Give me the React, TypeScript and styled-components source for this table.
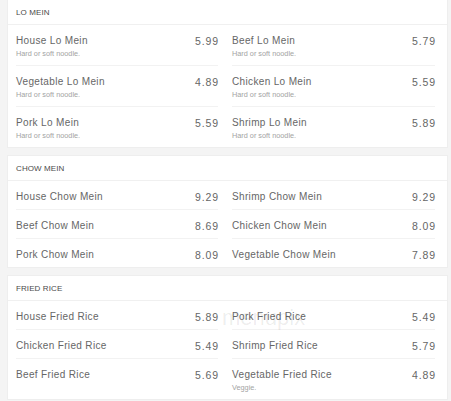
import React from 'react';
import styled, { createGlobalStyle } from 'styled-components';

interface IItem {
  name: string;
  price: string;
  note?: string;
}

interface ISection {
  title: string;
  items: IItem[];
}

const noodle = 'Hard or soft noodle.';

// Menu data, in reading order (left column, then right column, row by row).
const sections: ISection[] = [
  {
    title: 'LO MEIN',
    items: [
      { name: 'House Lo Mein', price: '5.99', note: noodle },
      { name: 'Beef Lo Mein', price: '5.79', note: noodle },
      { name: 'Vegetable Lo Mein', price: '4.89', note: noodle },
      { name: 'Chicken Lo Mein', price: '5.59', note: noodle },
      { name: 'Pork Lo Mein', price: '5.59', note: noodle },
      { name: 'Shrimp Lo Mein', price: '5.89', note: noodle },
    ],
  },
  {
    title: 'CHOW MEIN',
    items: [
      { name: 'House Chow Mein', price: '9.29' },
      { name: 'Shrimp Chow Mein', price: '9.29' },
      { name: 'Beef Chow Mein', price: '8.69' },
      { name: 'Chicken Chow Mein', price: '8.09' },
      { name: 'Pork Chow Mein', price: '8.09' },
      { name: 'Vegetable Chow Mein', price: '7.89' },
    ],
  },
  {
    title: 'FRIED RICE',
    items: [
      { name: 'House Fried Rice', price: '5.89' },
      { name: 'Pork Fried Rice', price: '5.49' },
      { name: 'Chicken Fried Rice', price: '5.49' },
      { name: 'Shrimp Fried Rice', price: '5.79' },
      { name: 'Beef Fried Rice', price: '5.69' },
      { name: 'Vegetable Fried Rice', price: '4.89', note: 'Veggie.' },
    ],
  },
];

const GlobalStyle = createGlobalStyle`
  html, body {
    margin: 0;
    padding: 0;
    background: #f4f4f4;
    font-family: 'Liberation Sans', Arial, sans-serif;
    overflow: hidden;
  }
`;

export default function App() {
  return (
    <>
      <GlobalStyle />
      <Page>
        {sections.map((section) => {
          const lastRow = Math.ceil(section.items.length / 2) - 1;
          return (
            <Card key={section.title}>
              <SectionTitle>{section.title}</SectionTitle>
              <ItemGrid>
                {section.items.map((item, index) => (
                  <Row key={item.name} $last={Math.floor(index / 2) === lastRow}>
                    <RowTop>
                      <Name>{item.name}</Name>
                      <Price>{item.price}</Price>
                    </RowTop>
                    {item.note && <Note>{item.note}</Note>}
                  </Row>
                ))}
              </ItemGrid>
            </Card>
          );
        })}
        <Watermark>menupix</Watermark>
      </Page>
    </>
  );
}

const Page = styled.div`
  position: relative;
  display: flex;
  flex-direction: column;
  gap: 7px;
  margin-top: -1px;
  padding: 0 3px 0 7px;
`;

const Card = styled.section`
  background: #fff;
  border: 1px solid #eeeeee;
`;

const SectionTitle = styled.div`
  height: 24px;
  display: flex;
  align-items: center;
  padding-left: 8px;
  border-bottom: 1px solid #f0f0f0;
  font-size: 8px;
  color: #4a4a4a;
  letter-spacing: 0.1px;
`;

const ItemGrid = styled.div`
  display: grid;
  grid-template-columns: 202px 203px;
  column-gap: 14px;
  padding: 0 13px 0 8px;
`;

const Row = styled.div<{ $last: boolean }>`
  display: flex;
  flex-direction: column;
  padding: 8px 0 5px;
  border-bottom: ${(p) => (p.$last ? 'none' : '1px solid #f2f2f2')};
`;

const RowTop = styled.div`
  display: flex;
  justify-content: space-between;
  align-items: center;
  height: 15px;
`;

const Name = styled.span`
  font-size: 10px;
  color: #666;
  letter-spacing: 0.35px;
`;

const Price = styled.span`
  font-size: 10.5px;
  color: #666;
  letter-spacing: 0.9px;
  margin-right: -1px;
`;

const Note = styled.div`
  font-size: 7.3px;
  line-height: 12px;
  color: #a3a3a3;
`;

const Watermark = styled.div`
  position: absolute;
  left: 222px;
  top: 306px;
  font-size: 22px;
  color: rgba(0, 0, 0, 0.08);
  pointer-events: none;
`;
